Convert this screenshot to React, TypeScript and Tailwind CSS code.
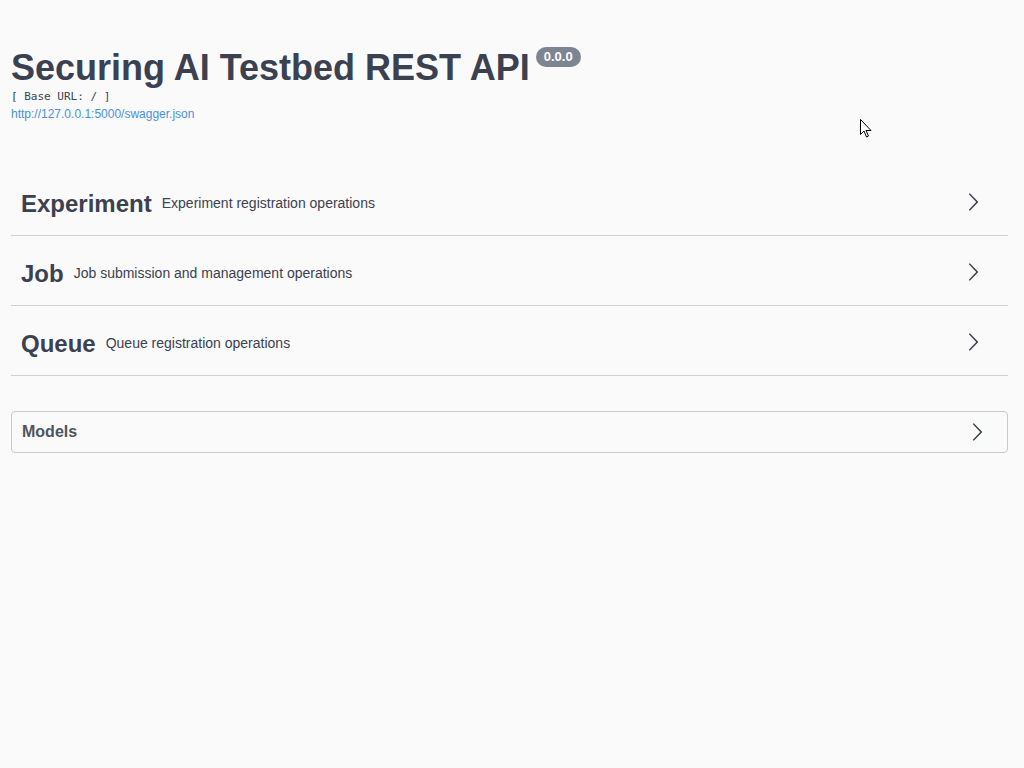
const tags = [
  { name: 'Experiment', description: 'Experiment registration operations' },
  { name: 'Job', description: 'Job submission and management operations' },
  { name: 'Queue', description: 'Queue registration operations' },
]

function Arrow() {
  return (
    <svg width="20" height="20" viewBox="0 0 20 20" className="fill-current">
      <path d="M13.25 10L6.109 2.58c-.268-.27-.268-.707 0-.979.268-.27.701-.27.969 0l7.830 7.908c.268.271.268.709 0 .979l-7.83 7.908c-.268.271-.701.27-.969 0-.268-.269-.268-.707 0-.979L13.25 10z" />
    </svg>
  )
}

export default function App() {
  return (
    <div className="relative min-h-[768px] bg-[#fafafa] text-[#3b4151] font-['Liberation_Sans',Arial,sans-serif]">
      {/* Info */}
      <div className="pl-[11px] pr-[16px] pt-[47px]">
        <div className="flex items-start">
          <h2 className="text-[36px] leading-[41px] font-bold">Securing AI Testbed REST API</h2>
          <span className="ml-[6px] mt-0 rounded-full bg-[#7d8492] px-[8px] h-[20px] leading-[20px] text-[13px] font-bold text-white">
            0.0.0
          </span>
        </div>
        <div className="mt-[2px] font-['DejaVu_Sans_Mono',monospace] text-[11px] leading-[14px]">[ Base URL: / ]</div>
        <a href="#" className="block text-[12px] leading-[20px] text-[#4990e2]">
          http://127.0.0.1:5000/swagger.json
        </a>

        {/* Tags */}
        <div className="mt-[42px]">
          {tags.map(tag => (
            <div
              key={tag.name}
              className="flex h-[70px] items-center border-b border-[#cfd0d3] pl-[10px] pr-[25px] pt-[6px]"
            >
              <h4 className="text-[24px] font-bold">{tag.name}</h4>
              <span className="ml-[10px] text-[14px]">{tag.description}</span>
              <div className="ml-auto mb-[4px]">
                <Arrow />
              </div>
            </div>
          ))}
        </div>

        {/* Models */}
        <div className="mt-[35px] flex h-[42px] items-center rounded-[4px] border border-[#c8c9cc] pl-[10px] pr-[20px]">
          <h4 className="text-[16px] font-bold text-[#505460]">Models</h4>
          <div className="ml-auto">
            <Arrow />
          </div>
        </div>
      </div>

      {/* Mouse pointer */}
      <svg className="absolute left-[860px] top-[119px]" width="13" height="20" viewBox="0 0 13 20">
        <path d="M0.5 0.5 L0.5 15.5 L4 12 L6.5 18 L8.5 17 L6 11.5 L11 11.5 Z" fill="white" stroke="black" strokeWidth="1" />
      </svg>
    </div>
  )
}
